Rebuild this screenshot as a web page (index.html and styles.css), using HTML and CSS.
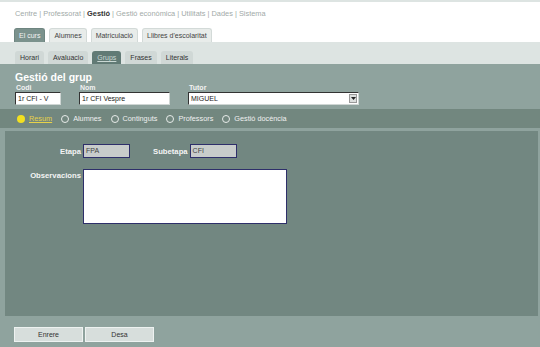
FILE: index.html
```html
<!DOCTYPE html>
<html lang="ca">
<head>
    <meta charset="UTF-8">
    <title>Gestió del grup</title>
    <link rel="stylesheet" href="styles.css">
</head>
<body>
    <div class="top">
        <div class="menu">
            <a>Centre</a> | <a>Professorat</a> | <a class="current">Gestió</a> | <a>Gestió econòmica</a> | <a>Utilitats</a> | <a>Dades</a> | <a>Sistema</a>
        </div>
        <div class="tabs">
            <span class="tab active">El curs</span>
            <span class="tab">Alumnes</span>
            <span class="tab">Matriculació</span>
            <span class="tab">Llibres d'escolaritat</span>
        </div>
    </div>

    <div class="subbar">
        <span class="subtab">Horari</span>
        <span class="subtab">Avaluacio</span>
        <span class="subtab active">Grups</span>
        <span class="subtab">Frases</span>
        <span class="subtab">Literals</span>
    </div>

    <div class="header">
        <h1 class="title">Gestió del grup</h1>
        <div class="fields">
            <div class="field">
                <label>Codi</label>
                <div class="input codi">1r CFI - V</div>
            </div>
            <div class="field">
                <label>Nom</label>
                <div class="input nom">1r CFI Vespre</div>
            </div>
            <div class="field">
                <label>Tutor</label>
                <div class="input select">
                    <span>MIGUEL</span>
                    <span class="drop">
                        <svg width="5" height="3" viewBox="0 0 5 3"><path d="M0 0h5L2.5 3z" fill="#222"/></svg>
                    </span>
                </div>
            </div>
        </div>
    </div>

    <div class="radios">
        <span class="radio on"><i></i><u>Resum</u></span>
        <span class="radio"><i></i>Alumnes</span>
        <span class="radio"><i></i>Continguts</span>
        <span class="radio"><i></i>Professors</span>
        <span class="radio"><i></i>Gestió docència</span>
    </div>

    <div class="panel">
        <div class="row">
            <span class="lbl">Etapa</span>
            <div class="ro etapa">FPA</div>
            <span class="lbl sub">Subetapa</span>
            <div class="ro">CFI</div>
        </div>
        <div class="row obs">
            <span class="lbl">Observacions</span>
            <div class="textarea"></div>
        </div>
    </div>

    <div class="footer">
        <button class="btn">Enrere</button>
        <button class="btn">Desa</button>
    </div>
</body>
</html>
```

FILE: styles.css
```css
body {
    margin: 0;
    font-family: 'Liberation Sans', Arial, sans-serif;
    font-size: 7px;
    background: #8fa39e;
    width: 540px;
    height: 347px;
    overflow: hidden;
}

.top {
    background: #ffffff;
    border-top: 2px solid #dde4e2;
    height: 40px;
    display: flex;
    flex-direction: column;
}

.menu {
    padding: 7px 0 0 15px;
    height: 18px;
    color: #a2aaa8;
    font-size: 7.4px;
    box-sizing: border-box;
}

.menu .current {
    color: #333333;
    font-weight: bold;
}

.tabs {
    display: flex;
    gap: 4px;
    padding-left: 14px;
    margin-top: 8px;
}

.tab {
    height: 14px;
    line-height: 14px;
    padding: 0 4px;
    background: #e8ecea;
    border: 1px solid #d3dad8;
    border-bottom: none;
    border-radius: 3px 3px 0 0;
    color: #444;
    box-sizing: border-box;
}

.tab.active {
    background: #7b928d;
    border-color: #6e8580;
    color: #f4f4f4;
}

.subbar {
    background: #dde4e2;
    height: 22px;
    display: flex;
    align-items: flex-end;
    gap: 4px;
    padding-left: 15px;
    box-sizing: border-box;
}

.subtab {
    height: 13px;
    line-height: 13px;
    padding: 0 5px;
    background: #d0d8d6;
    border-radius: 3px 3px 0 0;
    color: #333;
}

.subtab.active {
    background: #617a75;
    color: #c9d8d4;
    text-decoration: underline;
}

.header {
    height: 45px;
    padding: 8px 15px 0;
    box-sizing: border-box;
    color: #ffffff;
}

.title {
    margin: 0;
    font-size: 10.5px;
    line-height: 11px;
    font-weight: bold;
}

.fields {
    display: flex;
    margin-top: 1px;
}

.field {
    display: flex;
    flex-direction: column;
    margin-right: 18px;
}

.field label {
    font-weight: bold;
    font-size: 7px;
    line-height: 8px;
    padding-left: 1px;
    color: #f2f2f2;
}

.input {
    height: 13px;
    line-height: 11px;
    background: #ffffff;
    border: 1px solid #333333;
    border-right-color: #cfd6d4;
    border-bottom-color: #cfd6d4;
    box-sizing: border-box;
    color: #222;
    padding-left: 2px;
}

.codi { width: 46px; }
.nom { width: 91px; }

.select {
    width: 171px;
    display: flex;
    justify-content: space-between;
    align-items: center;
    padding-right: 1px;
}

.drop {
    width: 8px;
    height: 9px;
    background: #dcdfde;
    border: 1px solid #999;
    box-sizing: border-box;
    display: flex;
    align-items: center;
    justify-content: center;
}

.radios {
    background: #72877f;
    height: 19px;
    display: flex;
    align-items: center;
    padding-left: 17px;
    gap: 9px;
    font-size: 7.3px;
    color: #f0f0f0;
}

.radio {
    display: flex;
    align-items: center;
    gap: 3px;
}

.radio i {
    width: 6px;
    height: 6px;
    border: 1px solid #e8ecea;
    border-radius: 50%;
    margin-right: 1px;
}

.radio.on {
    color: #e6d24a;
}

.radio.on i {
    width: 8px;
    height: 8px;
    background: #f2e020;
    border: none;
}

.panel {
    background: #728781;
    margin: 3px 2px 0 5px;
    height: 185px;
    padding-top: 13px;
    box-sizing: border-box;
    color: #f4f4f4;
}

.row {
    display: flex;
    align-items: center;
}

.lbl {
    width: 78px;
    text-align: right;
    padding-right: 2px;
    font-weight: bold;
    font-size: 7.7px;
    box-sizing: border-box;
}

.lbl.sub {
    width: auto;
    margin-left: 23px;
    padding-right: 2px;
}

.ro {
    width: 47px;
    height: 14px;
    line-height: 12px;
    background: #c8cccb;
    border: 1px solid #2e2f6a;
    box-sizing: border-box;
    color: #444;
    padding-left: 2px;
}

.row.obs {
    align-items: flex-start;
    margin-top: 11px;
}

.row.obs .lbl {
    padding-top: 2px;
}

.textarea {
    width: 204px;
    height: 55px;
    background: #ffffff;
    border: 1px solid #2e2f6a;
    box-sizing: border-box;
}

.footer {
    display: flex;
    gap: 2px;
    padding: 11px 0 0 14px;
}

.btn {
    width: 69px;
    height: 15px;
    background: #d7dedc;
    border: 1px solid #eef2f1;
    font-family: inherit;
    font-size: 7px;
    color: #333;
    padding: 0;
}
```
